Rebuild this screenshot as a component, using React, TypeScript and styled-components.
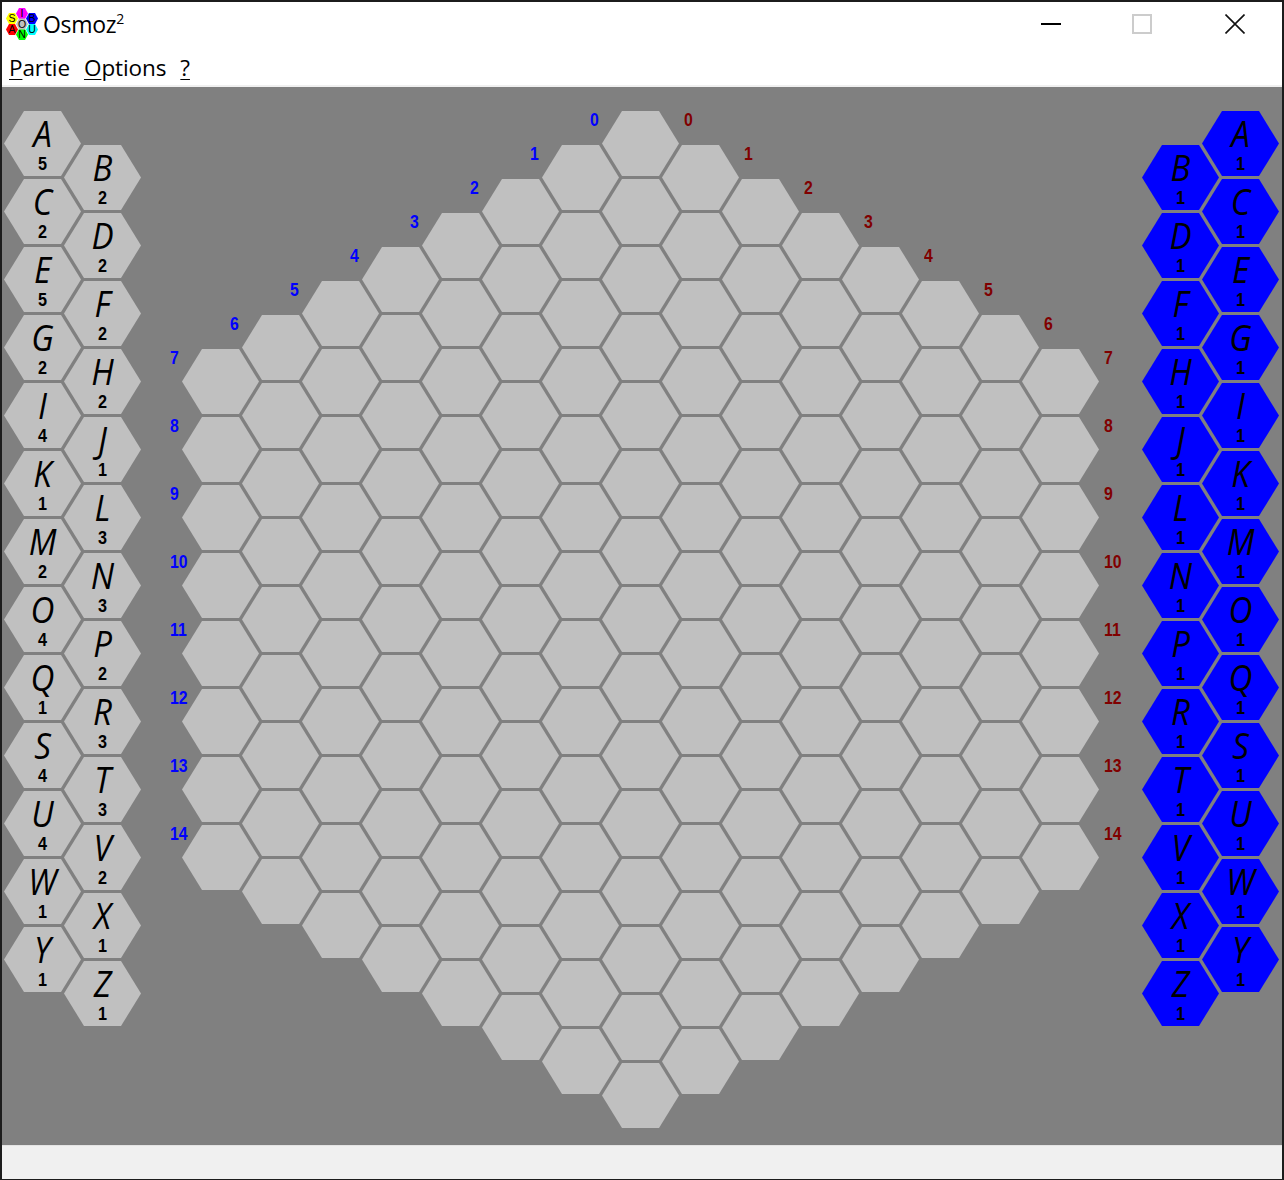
import React from "react";
import styled, { createGlobalStyle } from "styled-components";

const HEX_CLIP = "polygon(20px 0, 57px 0, 77px 32.5px, 57px 65px, 20px 65px, 0 32.5px)";
const LETTERS = "ABCDEFGHIJKLMNOPQRSTUVWXYZ".split("");
const LEFT_COUNTS = [5, 2, 2, 2, 5, 2, 2, 2, 4, 1, 1, 3, 2, 3, 4, 2, 1, 3, 4, 3, 4, 2, 1, 1, 1, 1];

const GlobalStyle = createGlobalStyle`
  html, body {
    margin: 0;
    padding: 0;
    background: #fff;
  }
`;

const Window = styled.div`
  width: 1284px;
  height: 1180px;
  box-sizing: border-box;
  display: flex;
  flex-direction: column;
  border: 2px solid #1c1c1c;
  border-bottom-width: 1px;
  background: #fff;
  overflow: hidden;
`;

const TitleBar = styled.div`
  height: 43px;
  display: flex;
  align-items: center;
  padding-left: 2px;
  flex-shrink: 0;
`;

const AppTitle = styled.div`
  margin: 2px 0 0 1px;
  font: 23px/1 "Open Sans", "Noto Sans", sans-serif;
  color: #000;
  letter-spacing: -0.3px;
  sup {
    font-size: 14px;
    line-height: 0;
    vertical-align: 9px;
  }
`;

const WindowControls = styled.div`
  margin-left: auto;
  padding-right: 1px;
  display: flex;
  height: 100%;
`;

const ControlButton = styled.div<{ $width?: number }>`
  width: ${(p) => p.$width ?? 93}px;
  display: flex;
  align-items: center;
  justify-content: center;
`;

const MenuBar = styled.div`
  height: 40px;
  display: flex;
  align-items: center;
  gap: 14px;
  padding-left: 7px;
  flex-shrink: 0;
  border-bottom: 2px solid #f0f0f0;
`;

const MenuItem = styled.span`
  position: relative;
  top: 3px;
  font: 22.5px/1 "Open Sans", "Noto Sans", sans-serif;
  letter-spacing: -0.1px;
  color: #000;
  u {
    text-underline-offset: 3px;
    text-decoration-thickness: 1px;
  }
`;

const GameArea = styled.div`
  flex: 1;
  display: flex;
  background: #808080;
  padding: 24px 0 0 10px;
  overflow: hidden;
`;

const Rack = styled.div`
  display: flex;
`;

const Board = styled.div`
  display: flex;
  margin: 0 60px 0 58px;
`;

const HexColumn = styled.div<{ $offset: number }>`
  width: 60px;
  padding-top: ${(p) => p.$offset}px;
  display: flex;
  flex-direction: column;
  gap: 3px;
`;

const Hex = styled.div<{ $color?: string }>`
  position: relative;
  flex-shrink: 0;
  width: 77px;
  height: 65px;
  margin: 0 -9px 0 -8px;

  &::before {
    content: "";
    position: absolute;
    inset: 0;
    clip-path: ${HEX_CLIP};
    background: ${(p) => p.$color ?? "#c0c0c0"};
  }
`;

const CoordLabel = styled.span<{ $side: "left" | "right" }>`
  position: absolute;
  top: 0;
  left: ${(p) => (p.$side === "left" ? -12 : 82)}px;
  font: bold 18px/18px "Liberation Sans", Arial, sans-serif;
  transform: scaleX(0.88);
  transform-origin: left center;
  color: ${(p) => (p.$side === "left" ? "#0000ff" : "#800000")};
`;

const TileLetter = styled.span`
  position: absolute;
  left: 0;
  right: 0;
  top: 4px;
  text-align: center;
  font: italic 400 36px/38px "Open Sans", "Lato", sans-serif;
  color: #000;
  transform: scaleX(0.92);
`;

const TileCount = styled.span`
  position: absolute;
  left: 0;
  right: 0;
  top: 44px;
  text-align: center;
  font: bold 18px/18px "Liberation Sans", Arial, sans-serif;
  transform: scaleX(0.9);
  color: #000;
`;

const StatusBar = styled.div`
  height: 34px;
  flex-shrink: 0;
  background: #f0f0f0;
  border-top: 1px solid #e4e4e4;
  box-sizing: border-box;
`;

const AppIcon = () => {
  const cells = [
    { c: "S", x: 10, y: 18.5, f: "#ffff00" },
    { c: "I", x: 20, y: 13.5, f: "#ff00ff" },
    { c: "B", x: 30, y: 18.5, f: "#0000ff" },
    { c: "A", x: 10, y: 29.5, f: "#ff0000" },
    { c: "U", x: 30, y: 29.5, f: "#00ffff" },
    { c: "N", x: 20, y: 34.5, f: "#00ff00" },
    { c: "O", x: 20, y: 24, f: "#c0c0c0" },
  ];
  return (
    <svg width="38" height="38" viewBox="2 4 38 38" style={{ flexShrink: 0, marginTop: -2 }}>
      {cells.map((h) => (
        <g key={h.c} transform={`translate(${h.x} ${h.y})`}>
          <polygon points="-3,-5.4 3,-5.4 6,0 3,5.4 -3,5.4 -6,0" fill={h.f} />
          <text y="3.8" textAnchor="middle" fontSize="10.5" fontFamily="Liberation Sans" fill="#000">
            {h.c}
          </text>
        </g>
      ))}
    </svg>
  );
};

const Tile = ({ letter, count, color }: { letter: string; count: number; color?: string }) => (
  <Hex $color={color}>
    <TileLetter>{letter}</TileLetter>
    <TileCount>{count}</TileCount>
  </Hex>
);

const TileRack = ({ counts, color, swap }: { counts: number[]; color?: string; swap?: boolean }) => {
  const odd = LETTERS.filter((_, i) => i % 2 === 0);
  const even = LETTERS.filter((_, i) => i % 2 === 1);
  const columns = [
    { letters: odd, offset: 0, base: 0 },
    { letters: even, offset: 34, base: 1 },
  ];
  if (swap) columns.reverse();
  return (
    <Rack>
      {columns.map((col) => (
        <HexColumn key={col.base} $offset={col.offset}>
          {col.letters.map((l, i) => (
            <Tile key={l} letter={l} count={counts[col.base + i * 2]} color={color} />
          ))}
        </HexColumn>
      ))}
    </Rack>
  );
};

const BoardColumn = ({ k }: { k: number }) => {
  const depth = Math.abs(k);
  const cells = Array.from({ length: 15 - depth }, (_, i) => i);
  return (
    <HexColumn $offset={depth * 34}>
      {cells.map((i) => (
        <Hex key={i}>
          {i === 0 && k <= 0 && <CoordLabel $side="left">{depth}</CoordLabel>}
          {i === 0 && k >= 0 && <CoordLabel $side="right">{depth}</CoordLabel>}
          {k === -7 && i > 0 && <CoordLabel $side="left">{7 + i}</CoordLabel>}
          {k === 7 && i > 0 && <CoordLabel $side="right">{7 + i}</CoordLabel>}
        </Hex>
      ))}
    </HexColumn>
  );
};

export default function App() {
  const columns = Array.from({ length: 15 }, (_, i) => i - 7);
  return (
    <>
      <GlobalStyle />
      <Window>
        <TitleBar>
          <AppIcon />
          <AppTitle>
            Osmoz<sup>2</sup>
          </AppTitle>
          <WindowControls>
            <ControlButton $width={89}>
              <svg width="20" height="20" viewBox="0 0 20 20">
                <path d="M0 10h20" stroke="#000" strokeWidth="2" />
              </svg>
            </ControlButton>
            <ControlButton>
              <svg width="20" height="20" viewBox="0 0 20 20">
                <rect x="1" y="1" width="18" height="18" fill="none" stroke="#cccccc" strokeWidth="2" />
              </svg>
            </ControlButton>
            <ControlButton>
              <svg width="20" height="20" viewBox="0 0 20 20">
                <path d="M0.5 0.5l19 19M19.5 0.5l-19 19" stroke="#111" strokeWidth="1.6" />
              </svg>
            </ControlButton>
          </WindowControls>
        </TitleBar>
        <MenuBar>
          <MenuItem>
            <u>P</u>artie
          </MenuItem>
          <MenuItem>
            <u>O</u>ptions
          </MenuItem>
          <MenuItem>
            <u>?</u>
          </MenuItem>
        </MenuBar>
        <GameArea>
          <TileRack counts={LEFT_COUNTS} />
          <Board>
            {columns.map((k) => (
              <BoardColumn key={k} k={k} />
            ))}
          </Board>
          <TileRack counts={LETTERS.map(() => 1)} color="#0000ff" swap />
        </GameArea>
        <StatusBar />
      </Window>
    </>
  );
}
